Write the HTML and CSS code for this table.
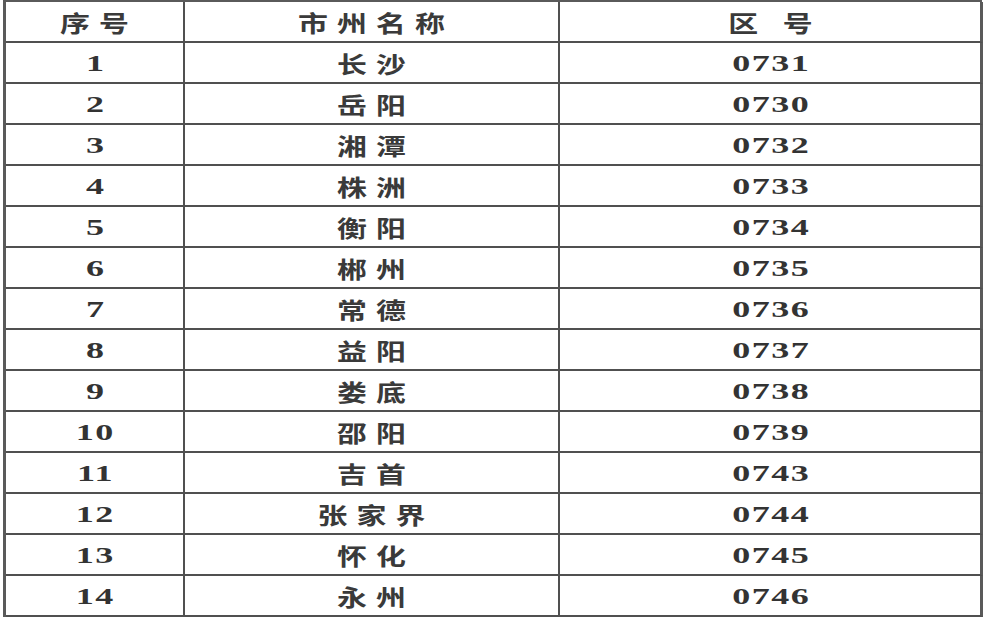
FILE: index.html
```html
<!DOCTYPE html>
<html lang="zh-CN">
<head>
<meta charset="utf-8">
<title>湖南市州区号</title>
<link rel="stylesheet" href="styles.css">
</head>
<body>
<div class="sheet">
  <div class="cell"><span class="zh">序号</span></div>
  <div class="cell"><span class="zh">市州名称</span></div>
  <div class="cell"><span class="zh wide">区号</span></div>

  <div class="cell"><span class="num">1</span></div>
  <div class="cell"><span class="zh">长沙</span></div>
  <div class="cell"><span class="num">0731</span></div>

  <div class="cell"><span class="num">2</span></div>
  <div class="cell"><span class="zh">岳阳</span></div>
  <div class="cell"><span class="num">0730</span></div>

  <div class="cell"><span class="num">3</span></div>
  <div class="cell"><span class="zh">湘潭</span></div>
  <div class="cell"><span class="num">0732</span></div>

  <div class="cell"><span class="num">4</span></div>
  <div class="cell"><span class="zh">株洲</span></div>
  <div class="cell"><span class="num">0733</span></div>

  <div class="cell"><span class="num">5</span></div>
  <div class="cell"><span class="zh">衡阳</span></div>
  <div class="cell"><span class="num">0734</span></div>

  <div class="cell"><span class="num">6</span></div>
  <div class="cell"><span class="zh">郴州</span></div>
  <div class="cell"><span class="num">0735</span></div>

  <div class="cell"><span class="num">7</span></div>
  <div class="cell"><span class="zh">常德</span></div>
  <div class="cell"><span class="num">0736</span></div>

  <div class="cell"><span class="num">8</span></div>
  <div class="cell"><span class="zh">益阳</span></div>
  <div class="cell"><span class="num">0737</span></div>

  <div class="cell"><span class="num">9</span></div>
  <div class="cell"><span class="zh">娄底</span></div>
  <div class="cell"><span class="num">0738</span></div>

  <div class="cell"><span class="num">10</span></div>
  <div class="cell"><span class="zh">邵阳</span></div>
  <div class="cell"><span class="num">0739</span></div>

  <div class="cell"><span class="num">11</span></div>
  <div class="cell"><span class="zh">吉首</span></div>
  <div class="cell"><span class="num">0743</span></div>

  <div class="cell"><span class="num">12</span></div>
  <div class="cell"><span class="zh">张家界</span></div>
  <div class="cell"><span class="num">0744</span></div>

  <div class="cell"><span class="num">13</span></div>
  <div class="cell"><span class="zh">怀化</span></div>
  <div class="cell"><span class="num">0745</span></div>

  <div class="cell"><span class="num">14</span></div>
  <div class="cell"><span class="zh">永州</span></div>
  <div class="cell"><span class="num">0746</span></div>
</div>
</body>
</html>
```

FILE: styles.css
```css
html, body {
  margin: 0;
  padding: 0;
  background: #ffffff;
}

.sheet {
  margin-left: 3px;
  width: 979px;
  display: grid;
  grid-template-columns: 179px 375px 423px;
  grid-auto-rows: 41px;
  border-top: 2px solid #5a5a5a;
  border-left: 3px solid #5a5a5a;
  box-sizing: border-box;
  color: #2a2a2a;
}

.cell {
  box-sizing: border-box;
  border-right: 2px solid #505050;
  border-bottom: 2px solid #505050;
  display: flex;
  align-items: center;
  justify-content: center;
  padding-top: 1px;
}

.cell:nth-child(3n) {
  border-right: 3px solid #5a5a5a;
}

.zh {
  display: inline-block;
  font-family: "Noto Sans CJK SC", "Noto Sans", sans-serif;
  font-weight: 700;
  font-size: 23px;
  line-height: 1;
  letter-spacing: 7px;
  padding-left: 7px;
  transform: scaleX(1.3);
  color: #3a3a3a;
}

.zh.wide {
  letter-spacing: 19px;
  padding-left: 19px;
}

.num {
  display: inline-block;
  font-family: "Liberation Serif", "Times New Roman", serif;
  font-weight: 700;
  font-size: 24px;
  line-height: 1;
  letter-spacing: 1px;
  padding-left: 1px;
  transform: scaleX(1.5);
  color: #333;
}
```
